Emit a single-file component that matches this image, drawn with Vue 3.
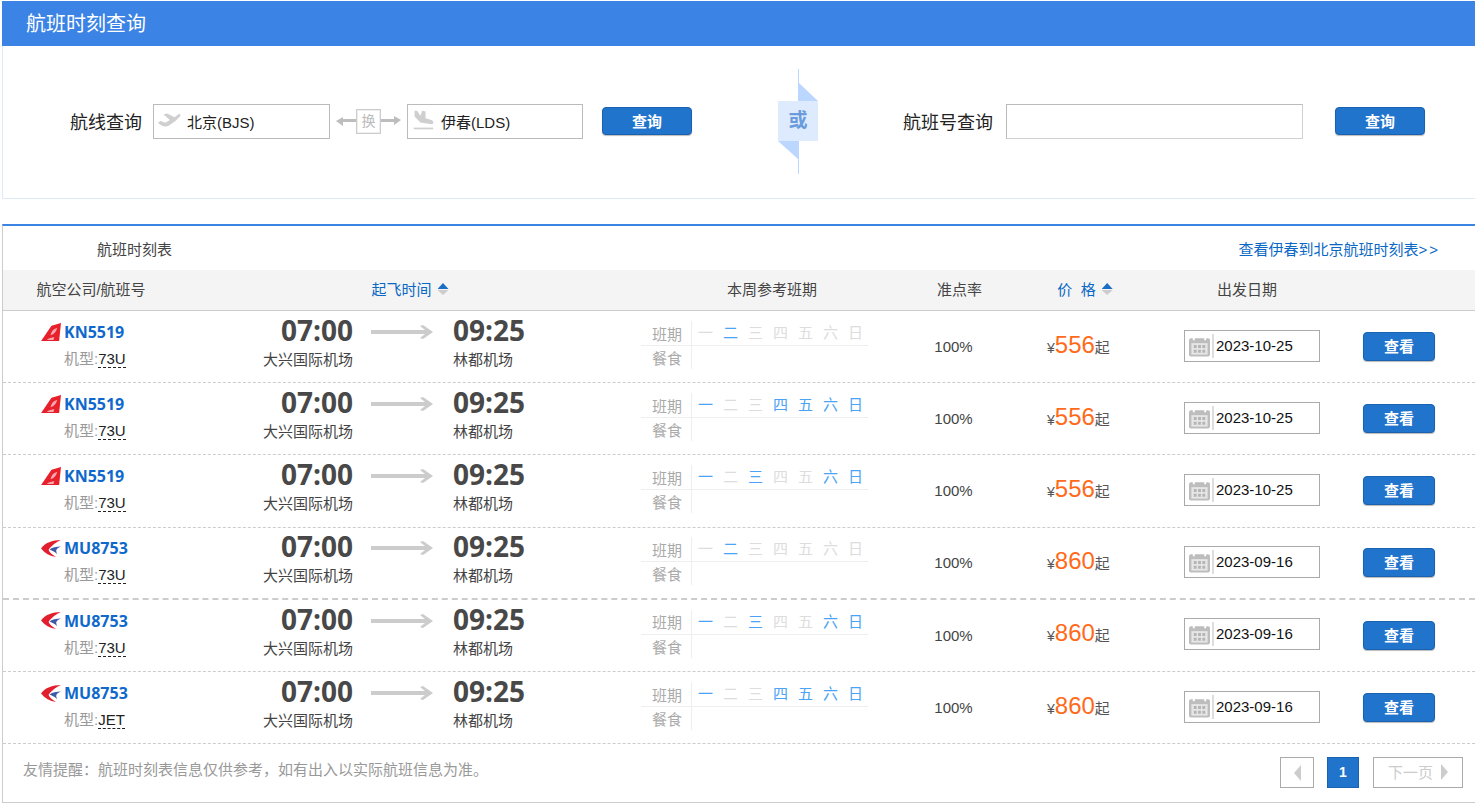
<script setup>
const dayNames = ['一', '二', '三', '四', '五', '六', '日'];

const flights = [
  { air: 'kn', no: 'KN5519', type: '73U', price: 556, date: '2023-10-25', days: [2] },
  { air: 'kn', no: 'KN5519', type: '73U', price: 556, date: '2023-10-25', days: [1, 4, 5, 6, 7] },
  { air: 'kn', no: 'KN5519', type: '73U', price: 556, date: '2023-10-25', days: [1, 3, 6, 7] },
  { air: 'mu', no: 'MU8753', type: '73U', price: 860, date: '2023-09-16', days: [2] },
  { air: 'mu', no: 'MU8753', type: '73U', price: 860, date: '2023-09-16', days: [1, 3, 6, 7] },
  { air: 'mu', no: 'MU8753', type: 'JET', price: 860, date: '2023-09-16', days: [1, 4, 5, 6, 7] },
];
</script>

<template>
  <div class="page">
    <h1 class="top_bar">航班时刻查询</h1>

    <section class="search">
      <div class="search_route">
        <label class="search_label">航线查询</label>
        <div class="city_input">
          <svg class="plane_icon" viewBox="0 0 26 20">
            <path d="M1 13 L4 11 L9 13 L14 10 L7 4 L11 3 L19 7 L23 4 C25 3 26 4 25 6 L20 11 L13 16 C9 18 5 17 1 13 Z" fill="#cfcfcf" />
          </svg>
          <span>北京(BJS)</span>
        </div>
        <div class="swap">
          <svg class="swap_arrow" viewBox="0 0 20 12"><path d="M0 6 L7 2 L7 4 L20 4 L20 7 L7 7 L7 11 Z" fill="#bdbdbd" /></svg>
          <span class="swap_box">换</span>
          <svg class="swap_arrow" viewBox="0 0 20 12"><path d="M20 5 L13 1 L13 4 L0 4 L0 7 L13 7 L13 10 Z" fill="#bdbdbd" /></svg>
        </div>
        <div class="city_input city_to">
          <svg class="plane_icon" viewBox="0 0 26 26">
            <path d="M3 2 L6 2 L10 8 L12 2 L16 3 L16 11 L23 13 C26 14 26 18 23 18 L10 16 L3 9 Z" fill="#cfcfcf" />
            <rect x="2" y="22" width="23" height="2" fill="#cfcfcf" />
          </svg>
          <span>伊春(LDS)</span>
        </div>
        <button class="btn btn_search">查询</button>
      </div>

      <div class="or_flag">
        <svg class="or_shape" viewBox="0 0 40 105">
          <polygon points="20,0 21,0 21,14 40,32 40,72 21,72 21,105 20,105 20,90 0,72 0,32 20,32" fill="#bcd7ff" />
          <rect x="0" y="32" width="40" height="40" fill="#deebff" />
        </svg>
        <span class="or_text">或</span>
      </div>

      <div class="search_number">
        <label class="search_label">航班号查询</label>
        <input class="number_input" type="text" />
        <button class="btn btn_search">查询</button>
      </div>
    </section>

    <section class="table_box">
      <div class="table_title">
        <span class="title_text">航班时刻表</span>
        <a class="back_link">查看伊春到北京航班时刻表<span class="link_arrows">&gt;&gt;</span></a>
      </div>

      <div class="row head">
        <div class="col_air">航空公司/航班号</div>
        <div class="col_time sort_cell">
          <a>起飞时间</a>
          <span class="sort"><i class="sort_up"></i><i class="sort_down"></i></span>
        </div>
        <div class="col_week">本周参考班期</div>
        <div class="col_rate">准点率</div>
        <div class="col_price sort_cell">
          <a>价&nbsp;&nbsp;格</a>
          <span class="sort"><i class="sort_up"></i><i class="sort_down"></i></span>
        </div>
        <div class="col_date">出发日期</div>
        <div class="col_btn"></div>
      </div>

      <div v-for="(f, i) in flights" :key="i" class="row flight" :class="{ thick_line: i === 3 }">
        <div class="col_air">
          <div class="air_line">
            <svg v-if="f.air === 'kn'" class="logo" viewBox="0 0 22 20">
              <path d="M0 19 L11 3 L21 0 L19 19 Z" fill="#e8202c" />
              <path d="M10 13 C11 8 14 6 17 5 C16 9 14 12 10 13 Z M6 18 C8 16 11 15 14 15 L13 18 Z" fill="#f7a9ad" />
            </svg>
            <svg v-else class="logo" viewBox="0 0 22 20">
              <path d="M21 1 C12 1 4 4 0 10 C4 15 9 18 16 19 C11 16 8 13 8 11 C11 7 16 3 21 1 Z" fill="#e21f2d" />
              <path d="M21 8 C16 8 12 9 9 11 C12 12 15 14 17 16 C15 12 16 10 21 8 Z" fill="#3c5aa6" />
            </svg>
            <a class="flight_no">{{ f.no }}</a>
          </div>
          <div class="plane_type">机型:<span class="type_code">{{ f.type }}</span></div>
        </div>

        <div class="col_time time_cell">
          <div class="time_side dep">
            <strong>07:00</strong>
            <span>大兴国际机场</span>
          </div>
          <svg class="time_arrow" viewBox="0 0 62 14">
            <path d="M0 5 L54 5 L49 1 L52 0 L62 7 L52 14 L49 13 L54 9 L0 9 Z" fill="#cccccc" />
          </svg>
          <div class="time_side arr">
            <strong>09:25</strong>
            <span>林都机场</span>
          </div>
        </div>

        <div class="col_week">
          <div class="week_table">
            <div class="week_row week_top">
              <span class="week_label">班期</span>
              <div class="week_days">
                <span v-for="(d, n) in dayNames" :key="d" class="day" :class="{ on: f.days.includes(n + 1) }">{{ d }}</span>
              </div>
            </div>
            <div class="week_row">
              <span class="week_label">餐食</span>
              <div class="week_days"></div>
            </div>
          </div>
        </div>

        <div class="col_rate rate">100%</div>

        <div class="col_price price_cell">
          <span class="yen">¥</span><span class="price">{{ f.price }}</span><span class="qi">起</span>
        </div>

        <div class="col_date">
          <div class="date_box">
            <svg class="cal" viewBox="0 0 22 22">
              <path d="M2 3 H20 Q22 3 22 5 V20 Q22 22 20 22 H2 Q0 22 0 20 V5 Q0 3 2 3 Z" fill="#bdbdbd" />
              <rect x="2.5" y="8" width="17" height="12" fill="#e6e6e6" />
              <rect x="4" y="0" width="2" height="5" fill="#fff" />
              <rect x="16" y="0" width="2" height="5" fill="#fff" />
              <path d="M5 10h3v3H5z M9.5 10h3v3h-3z M14 10h3v3h-3z M5 15h3v3H5z M9.5 15h3v3h-3z M14 15h3v3h-3z" fill="#b5b5b5" />
            </svg>
            <span class="date_text">{{ f.date }}</span>
          </div>
        </div>

        <div class="col_btn">
          <button class="btn btn_view">查看</button>
        </div>
      </div>

      <div class="table_foot">
        <p class="tip">友情提醒：航班时刻表信息仅供参考，如有出入以实际航班信息为准。</p>
        <div class="pager">
          <span class="page_btn page_prev"><i class="tri_left"></i></span>
          <span class="page_num">1</span>
          <span class="page_btn page_next">下一页<i class="tri_right"></i></span>
        </div>
      </div>
    </section>
  </div>
</template>

<style>
html, body {
  margin: 0;
  background: #fff;
}
</style>

<style scoped>
.page {
  padding: 1px 0 0 2px;
  width: 1473px;
  height: 804px;
  overflow: hidden;
  font-family: "Liberation Sans", "Noto Sans CJK SC", sans-serif;
  font-size: 15px;
  color: #444;
}

.top_bar {
  margin: 0;
  height: 45px;
  padding-left: 24px;
  background: #3b83e4;
  color: #fff;
  font-size: 20px;
  font-weight: normal;
  line-height: 47px;
}

.search {
  height: 150px;
  padding-bottom: 2px;
  border: 1px solid #dcebf7;
  border-top: none;
  border-right: none;
  display: flex;
  align-items: center;
}

.search_route {
  display: flex;
  align-items: center;
  margin-left: 67px;
  width: 708px;
  flex: none;
}

.search_label {
  font-size: 18px;
  color: #222;
  white-space: nowrap;
}

.city_input {
  margin-left: 11px;
  width: 175px;
  height: 33px;
  border: 1px solid #bbb;
  display: flex;
  align-items: center;
  color: #222;
  font-size: 15px;
}

.city_to {
  margin-left: 0;
  width: 174px;
}

.plane_icon {
  width: 24px;
  height: 22px;
  margin: 0 6px 3px 3px;
  flex: none;
}

.swap {
  display: flex;
  align-items: center;
  width: 77px;
  padding: 0 6px;
  box-sizing: border-box;
}

.swap_arrow {
  width: 20px;
  height: 12px;
  flex: none;
}

.swap_box {
  width: 25px;
  height: 25px;
  flex: none;
  border: 1px solid #ccc;
  box-shadow: inset 0 0 0 1px #eee;
  box-sizing: border-box;
  text-align: center;
  line-height: 23px;
  font-size: 14px;
  color: #bbb;
  background: #fff;
}

.btn {
  border: 1px solid #1a62b0;
  border-radius: 4px;
  background: #2174cc;
  color: #fff;
  font-family: inherit;
  font-weight: bold;
  font-size: 15px;
  box-shadow: 0 1px 1px #bbb;
  padding: 0 0 2px;
}

.btn_search {
  width: 90px;
  height: 28px;
  margin-left: 19px;
}

.or_flag {
  position: relative;
  width: 40px;
  height: 105px;
  flex: none;
}

.or_shape {
  width: 40px;
  height: 105px;
  display: block;
}

.or_text {
  position: absolute;
  left: 0;
  right: 0;
  top: 38px;
  text-align: center;
  font-size: 19px;
  font-weight: bold;
  color: #6a9bdb;
  line-height: 28px;
}

.search_number {
  display: flex;
  align-items: center;
  margin-left: 85px;
  flex: none;
}

.number_input {
  margin-left: 13px;
  width: 297px;
  height: 35px;
  box-sizing: border-box;
  border: 1px solid #d0d0d0;
  border-top-color: #bbb;
  border-left-color: #bbb;
  outline: none;
}

.search_number .btn_search {
  margin-left: 32px;
}

.table_box {
  margin-top: 25px;
  border-top: 2px solid #3b83e4;
  border-left: 1px solid #ccc;
  border-bottom: 1px solid #ccc;
}

.table_title {
  height: 44px;
  display: flex;
  justify-content: space-between;
  align-items: center;
  color: #444;
}

.title_text {
  margin-left: 94px;
}

.back_link {
  margin-right: 37px;
  color: #0a68c4;
  white-space: nowrap;
  flex: none;
}

.link_arrows {
  letter-spacing: 2px;
  margin-right: -2px;
}

.row {
  display: grid;
  grid-template-columns: 176px 450px 286px 89px 162px 162px 147px;
}

.head {
  height: 37px;
  padding-bottom: 3px;
  background: #f4f4f4;
  border-bottom: 1px solid #ccc;
  align-items: center;
  text-align: center;
}

.sort_cell {
  display: flex;
  align-items: center;
  justify-content: center;
  color: #0a68c4;
}

.head .col_time {
  padding-left: 12px;
}

.sort {
  display: inline-flex;
  flex-direction: column;
  margin-left: 6px;
  margin-top: 1px;
}

.sort_up {
  width: 11px;
  height: 6px;
  background: #1a6fc4;
  clip-path: polygon(50% 0, 100% 100%, 0 100%);
}

.sort_down {
  width: 11px;
  height: 5px;
  margin-top: 1px;
  background: #ccc;
  clip-path: polygon(0 0, 100% 0, 50% 100%);
}

.flight {
  height: 71.2px;
  border-bottom: 1px dashed #ccc;
  align-items: center;
}

.thick_line {
  border-bottom-width: 2px;
  height: 70.2px;
}

.flight .col_air {
  padding-left: 38px;
  padding-bottom: 3px;
  text-align: left;
}

.air_line {
  display: flex;
  align-items: center;
  height: 20px;
}

.logo {
  width: 21px;
  height: 19px;
  flex: none;
  margin-right: 2px;
}

.flight_no {
  font-family: "Open Sans", sans-serif;
  font-weight: bold;
  font-size: 16px;
  color: #0f68cc;
}

.plane_type {
  margin: 8px 0 0 23px;
  color: #999;
  line-height: 18px;
}

.type_code {
  color: #222;
  border-bottom: 1px dashed #222;
}

.time_cell {
  display: flex;
  align-items: flex-start;
  padding-bottom: 10px;
}

.time_side {
  display: flex;
  flex-direction: column;
}

.time_side strong {
  font-family: "Open Sans", sans-serif;
  font-weight: bold;
  font-size: 28px;
  line-height: 32px;
  color: #484848;
}

.time_side span {
  margin-top: 5px;
  line-height: 18px;
  color: #444;
}

.dep {
  width: 174px;
  text-align: right;
  align-items: flex-end;
}

.time_arrow {
  width: 62px;
  height: 14px;
  margin: 11px 20px 0 18px;
  flex: none;
}

.week_table {
  width: 227px;
  margin-left: 12px;
  padding-bottom: 3px;
}

.week_row {
  display: flex;
  height: 23px;
  align-items: center;
}

.week_top {
  height: 24px;
  border-bottom: 1px solid #eee;
}

.week_label {
  width: 50px;
  box-sizing: border-box;
  padding-left: 11px;
  color: #aaa;
  flex: none;
}

.week_days {
  height: 100%;
  flex: 1;
  border-left: 1px solid #eee;
  display: flex;
  padding-left: 6px;
  align-items: center;
}

.day {
  width: 25px;
  flex: none;
  text-align: left;
  color: #ddd;
  line-height: 22px;
}

.day.on {
  color: #4ba3f5;
}

.rate {
  text-align: center;
  padding-right: 12px;
  color: #444;
}

.price_cell {
  padding-left: 43px;
  padding-bottom: 4px;
  display: flex;
  align-items: baseline;
  justify-content: flex-start;
}

.yen {
  color: #555;
  font-size: 14px;
}

.price {
  font-size: 24px;
  color: #ff6a1a;
}

.qi {
  color: #555;
}

.head .col_date {
  text-align: center;
}

.date_box {
  margin-left: 18px;
  margin-bottom: 2px;
  width: 136px;
  height: 32px;
  box-sizing: border-box;
  border: 1px solid #aaa;
  display: flex;
  align-items: center;
  color: #111;
}

.cal {
  width: 21px;
  height: 22px;
  margin-left: 4px;
  flex: none;
}

.date_text {
  margin-left: 2px;
  padding-left: 2px;
  border-left: 2px solid #ddd;
  line-height: 24px;
}

.btn_view {
  display: block;
  width: 72px;
  height: 29px;
  margin: 0 0 0 35px;
}

.table_foot {
  height: 58px;
  display: flex;
  justify-content: space-between;
}

.tip {
  margin: 17px 0 0 20px;
  color: #999;
  line-height: 18px;
}

.pager {
  display: flex;
  margin: 13px 12px 0 0;
}

.page_btn {
  height: 31px;
  box-sizing: border-box;
  border: 1px solid #aaa;
  display: flex;
  align-items: center;
  justify-content: center;
  color: #ccc;
}

.page_prev {
  width: 34px;
}

.page_next {
  width: 90px;
  padding-bottom: 2px;
}

.page_num {
  width: 32px;
  height: 31px;
  box-sizing: border-box;
  margin: 0 14px 0 13px;
  border: 1px solid #1a62b0;
  background: #2174cc;
  color: #fff;
  text-align: center;
  line-height: 29px;
  font-size: 14px;
  font-weight: bold;
}

.tri_left {
  border: 8px solid transparent;
  border-left: none;
  border-right: 7px solid #ccc;
}

.tri_right {
  margin-left: 8px;
  border: 8px solid transparent;
  border-right: none;
  border-left: 7px solid #ccc;
}
</style>
